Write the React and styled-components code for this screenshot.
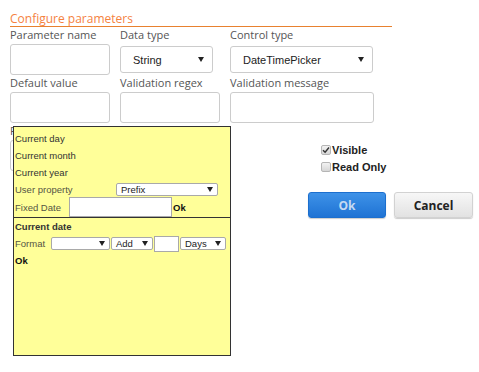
import * as React from 'react';
import styled, { createGlobalStyle } from 'styled-components';

const GlobalStyle = createGlobalStyle`
  html, body {
    margin: 0;
    padding: 0;
    background: #ffffff;
  }
  body {
    font-family: 'Open Sans', 'Liberation Sans', sans-serif;
  }
`;

const Page = styled.div`
  position: relative;
  padding: 11px 0 0 10px;
  width: 469px;
  height: 361px;
`;

const Title = styled.div`
  width: 382px;
  font-size: 12px;
  line-height: 15px;
  color: #f5823f;
  border-bottom: 1px solid #e8812f;
`;

const FieldGrid = styled.div`
  display: grid;
  grid-template-columns: 110px 110px auto;
`;

const Field = styled.div`
  display: flex;
  flex-direction: column;
  height: 48px;
`;

const Label = styled.div`
  font-size: 11px;
  line-height: 15px;
  color: #555555;
  white-space: nowrap;
  margin-bottom: 2px;
`;

const TextInput = styled.div`
  box-sizing: border-box;
  width: ${(props) => props.width || 100}px;
  height: 31px;
  border: 1px solid #cccccc;
  border-radius: 3px;
  background: #ffffff;
`;

const Select = styled.div`
  box-sizing: border-box;
  display: flex;
  align-items: center;
  justify-content: space-between;
  width: ${(props) => props.width}px;
  height: 27px;
  margin-top: 2px;
  padding: 0 8px 0 12px;
  border: 1px solid #cccccc;
  border-radius: 3px;
  background: #ffffff;
  font-family: 'Liberation Sans', Arial, sans-serif;
  font-size: 11px;
  color: #222222;
`;

const LowerRow = styled.div`
  display: grid;
  grid-template-columns: 298px auto;
`;

const SidePanel = styled.div`
  padding-top: 18px;
`;

const CheckRow = styled.label`
  display: flex;
  align-items: center;
  height: 17px;
  padding-left: 13px;
  font-family: 'Liberation Sans', Arial, sans-serif;
  font-size: 11px;
  font-weight: bold;
  color: #222222;
`;

const CheckBox = styled.span`
  box-sizing: border-box;
  display: flex;
  align-items: center;
  justify-content: center;
  width: 10px;
  height: 10px;
  margin-right: 1px;
  border: 1px solid #b5b5b5;
  border-radius: 2px;
  background: linear-gradient(#f2f2f2, #d6d6d6);
`;

const Buttons = styled.div`
  display: flex;
  gap: 8px;
  margin-top: 17px;
`;

const Button = styled.button`
  width: ${(props) => (props.primary ? 78 : 79)}px;
  height: 26px;
  padding: 0;
  border-radius: 3px;
  font-family: 'Open Sans', sans-serif;
  font-size: 12px;
  font-weight: bold;
  border: 1px solid ${(props) => (props.primary ? '#1c6fce' : '#d2d2d2')};
  color: ${(props) => (props.primary ? '#c6daf2' : '#222222')};
  background: ${(props) =>
    props.primary
      ? 'linear-gradient(#3e92e8, #1f73d4)'
      : 'linear-gradient(#f7f7f7, #e2e2e2)'};
  box-shadow: 0 1px 1px rgba(0, 0, 0, 0.2);
`;

/* yellow date picker dropdown lying over the form */
const Popup = styled.div`
  position: absolute;
  left: 13px;
  top: 126px;
  box-sizing: border-box;
  width: 218px;
  height: 230px;
  border: 1px solid #333333;
  background: #ffff99;
  font-family: 'Liberation Sans', Arial, sans-serif;
  font-size: 9.5px;
  color: #333333;
`;

const Section = styled.div`
  padding: ${(props) => props.pad || '0'};
  border-top: ${(props) => (props.divided ? '1px solid #333333' : 'none')};
`;

const Line = styled.div`
  display: flex;
  align-items: center;
  height: ${(props) => props.h || 17}px;
  padding-left: 1px;
  color: ${(props) => (props.muted ? '#555544' : '#333333')};
  font-weight: ${(props) => (props.bold ? 'bold' : 'normal')};
  white-space: nowrap;
`;

const InlineLabel = styled.span`
  width: ${(props) => props.width}px;
  flex: none;
`;

const MiniSelect = styled.span`
  box-sizing: border-box;
  display: flex;
  align-items: center;
  justify-content: space-between;
  width: ${(props) => props.width}px;
  height: 13px;
  margin-right: ${(props) => (props.mr === undefined ? 1 : props.mr)}px;
  padding: 0 4px 0 4px;
  border: 1px solid #a9a9a9;
  border-radius: 2px;
  background: #ffffff;
  color: #222222;
  flex: none;
`;

const MiniInput = styled.span`
  box-sizing: border-box;
  width: ${(props) => props.width}px;
  height: ${(props) => props.h}px;
  margin-right: ${(props) => props.mr || 0}px;
  border: 1px solid #a9a9a9;
  background: #ffffff;
  flex: none;
`;

const OkText = styled.span`
  font-weight: bold;
  color: #111111;
`;

const Arrow = ({ size = 6 }) => (
  <svg width={size} height={size - 1} viewBox="0 0 6 5">
    <path d="M0 0 L6 0 L3 5 Z" fill="#222" />
  </svg>
);

const Check = () => (
  <svg width="8" height="8" viewBox="0 0 8 8">
    <path d="M1 4.2 L3.1 6.3 L7 1.5" stroke="#333" strokeWidth="1.4" fill="none" />
  </svg>
);

export default function App() {
  return (
    <>
      <GlobalStyle />
      <Page>
        <Title>Configure parameters</Title>
        <FieldGrid>
          <Field>
            <Label>Parameter name</Label>
            <TextInput />
          </Field>
          <Field>
            <Label>Data type</Label>
            <Select width={93}>
              String
              <Arrow />
            </Select>
          </Field>
          <Field>
            <Label>Control type</Label>
            <Select width={143}>
              DateTimePicker
              <Arrow />
            </Select>
          </Field>
          <Field>
            <Label>Default value</Label>
            <TextInput />
          </Field>
          <Field>
            <Label>Validation regex</Label>
            <TextInput />
          </Field>
          <Field>
            <Label>Validation message</Label>
            <TextInput width={144} />
          </Field>
        </FieldGrid>
        <LowerRow>
          <Field>
            <Label>Parameter format</Label>
            <TextInput />
          </Field>
          <SidePanel>
            <CheckRow>
              <CheckBox>
                <Check />
              </CheckBox>
              Visible
            </CheckRow>
            <CheckRow>
              <CheckBox />
              Read Only
            </CheckRow>
            <Buttons>
              <Button primary type="button">
                Ok
              </Button>
              <Button type="button">Cancel</Button>
            </Buttons>
          </SidePanel>
        </LowerRow>

        <Popup>
          <Section pad="3px 0 0 0">
            <Line>Current day</Line>
            <Line>Current month</Line>
            <Line>Current year</Line>
            <Line h={16} muted>
              <InlineLabel width={101}>User property</InlineLabel>
              <MiniSelect width={102}>
                Prefix
                <Arrow />
              </MiniSelect>
            </Line>
            <Line h={20} muted>
              <InlineLabel width={54}>Fixed Date</InlineLabel>
              <MiniInput width={103} h={20} mr={1} />
              <OkText>Ok</OkText>
            </Line>
          </Section>
          <Section divided>
            <Line bold>Current date</Line>
            <Line muted>
              <InlineLabel width={36}>Format</InlineLabel>
              <MiniSelect width={59}>
                <span />
                <Arrow />
              </MiniSelect>
              <MiniSelect width={42}>
                Add
                <Arrow />
              </MiniSelect>
              <MiniInput width={25} h={16} mr={1} />
              <MiniSelect width={46} mr={0}>
                Days
                <Arrow />
              </MiniSelect>
            </Line>
            <Line>
              <OkText>Ok</OkText>
            </Line>
          </Section>
        </Popup>
      </Page>
    </>
  );
}
